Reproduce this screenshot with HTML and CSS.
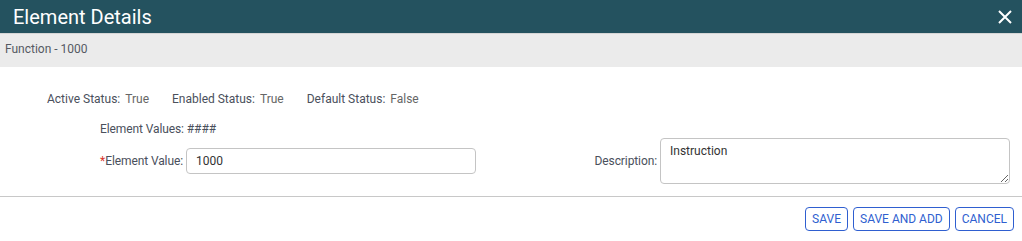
FILE: index.html
```html
<!DOCTYPE html>
<html lang="en">
<head>
  <meta charset="UTF-8">
  <title>Element Details</title>
  <link rel="stylesheet" href="styles.css">
</head>
<body>

  <header class="dialog-head">
    <h1>Element Details</h1>
    <button class="close-btn" aria-label="Close">
      <svg width="14" height="14" viewBox="0 0 14 14">
        <path d="M1 1 L13 13 M13 1 L1 13" stroke="#fff" stroke-width="2" fill="none"/>
      </svg>
    </button>
  </header>

  <div class="sub-head">Function - 1000</div>

  <section class="dialog-body">
    <div class="status-row">
      <span class="stat"><label>Active Status:</label> <span class="val">True</span></span>
      <span class="stat"><label>Enabled Status:</label> <span class="val">True</span></span>
      <span class="stat"><label>Default Status:</label> <span class="val">False</span></span>
    </div>

    <div class="values-row">
      <label>Element Values:</label> <span class="val-dark">####</span>
    </div>

    <div class="form-row">
      <div class="field">
        <label class="field-label" for="elval"><span class="req">*</span>Element Value:</label>
        <input type="text" id="elval" value="1000">
      </div>
      <div class="field field-right">
        <label class="field-label" for="desc">Description:</label>
        <textarea id="desc">Instruction</textarea>
      </div>
    </div>
  </section>

  <footer class="dialog-foot">
    <button class="btn">SAVE</button>
    <button class="btn">SAVE AND ADD</button>
    <button class="btn">CANCEL</button>
  </footer>

</body>
</html>
```

FILE: styles.css
```css
body {
  margin: 0;
  font-family: Roboto, "Liberation Sans", sans-serif;
  font-size: 12px;
  background-color: #fff;
  color: #4a505c;
}
.dialog-head {
  display: flex;
  align-items: center;
  justify-content: space-between;
  height: 33px;
  padding: 0 10px 0 13px;
  background-color: #24525f;
}
.dialog-head h1 {
  margin: 0;
  font-size: 20px;
  font-weight: 400;
  color: #fff;
}
.close-btn {
  border: none;
  background: none;
  padding: 0;
  display: flex;
  cursor: pointer;
}
.sub-head {
  height: 33px;
  line-height: 31px;
  padding: 0 5px;
  background-color: #ebebeb;
  border-top: 1px solid #d5d5d5;
  color: #555a63;
}
.dialog-body {
  padding-top: 24px;
}
.status-row {
  display: flex;
  gap: 23px;
  padding-left: 47px;
  line-height: 16px;
}
.val {
  color: #666;
  margin-left: 2px;
}
.values-row {
  margin-top: 14px;
  padding-left: 100px;
  line-height: 16px;
  letter-spacing: -0.1px;
}
.form-row {
  display: flex;
  align-items: center;
  margin-top: 1px;
}
.field {
  display: flex;
  align-items: center;
}
.field-right {
  margin-left: auto;
  margin-right: 12px;
}
.field-label {
  text-align: right;
  padding-right: 3px;
  letter-spacing: -0.1px;
}
.field:first-child .field-label {
  width: 183px;
}
.req {
  color: #d9342b;
}
input, textarea {
  font-family: Roboto, "Liberation Sans", sans-serif;
  font-size: 12px;
  color: #333;
  border: 1px solid #c4c4c4;
  border-radius: 4px;
  box-sizing: border-box;
  outline: none;
}
input {
  width: 290px;
  height: 26px;
  padding: 0 9px;
}
textarea {
  width: 350px;
  height: 46px;
  padding: 5px 9px;
  resize: both;
}
.dialog-foot {
  display: flex;
  justify-content: flex-end;
  gap: 5px;
  margin-top: 12px;
  padding: 10px 8px 0 0;
  border-top: 1px solid #c8c8c8;
}
.btn {
  height: 24px;
  padding: 0 6px;
  font-family: Roboto, "Liberation Sans", sans-serif;
  font-size: 12px;
  color: #2f5fd0;
  background: #fff;
  border: 1px solid #2f5fd0;
  border-radius: 4px;
  cursor: pointer;
}
```
